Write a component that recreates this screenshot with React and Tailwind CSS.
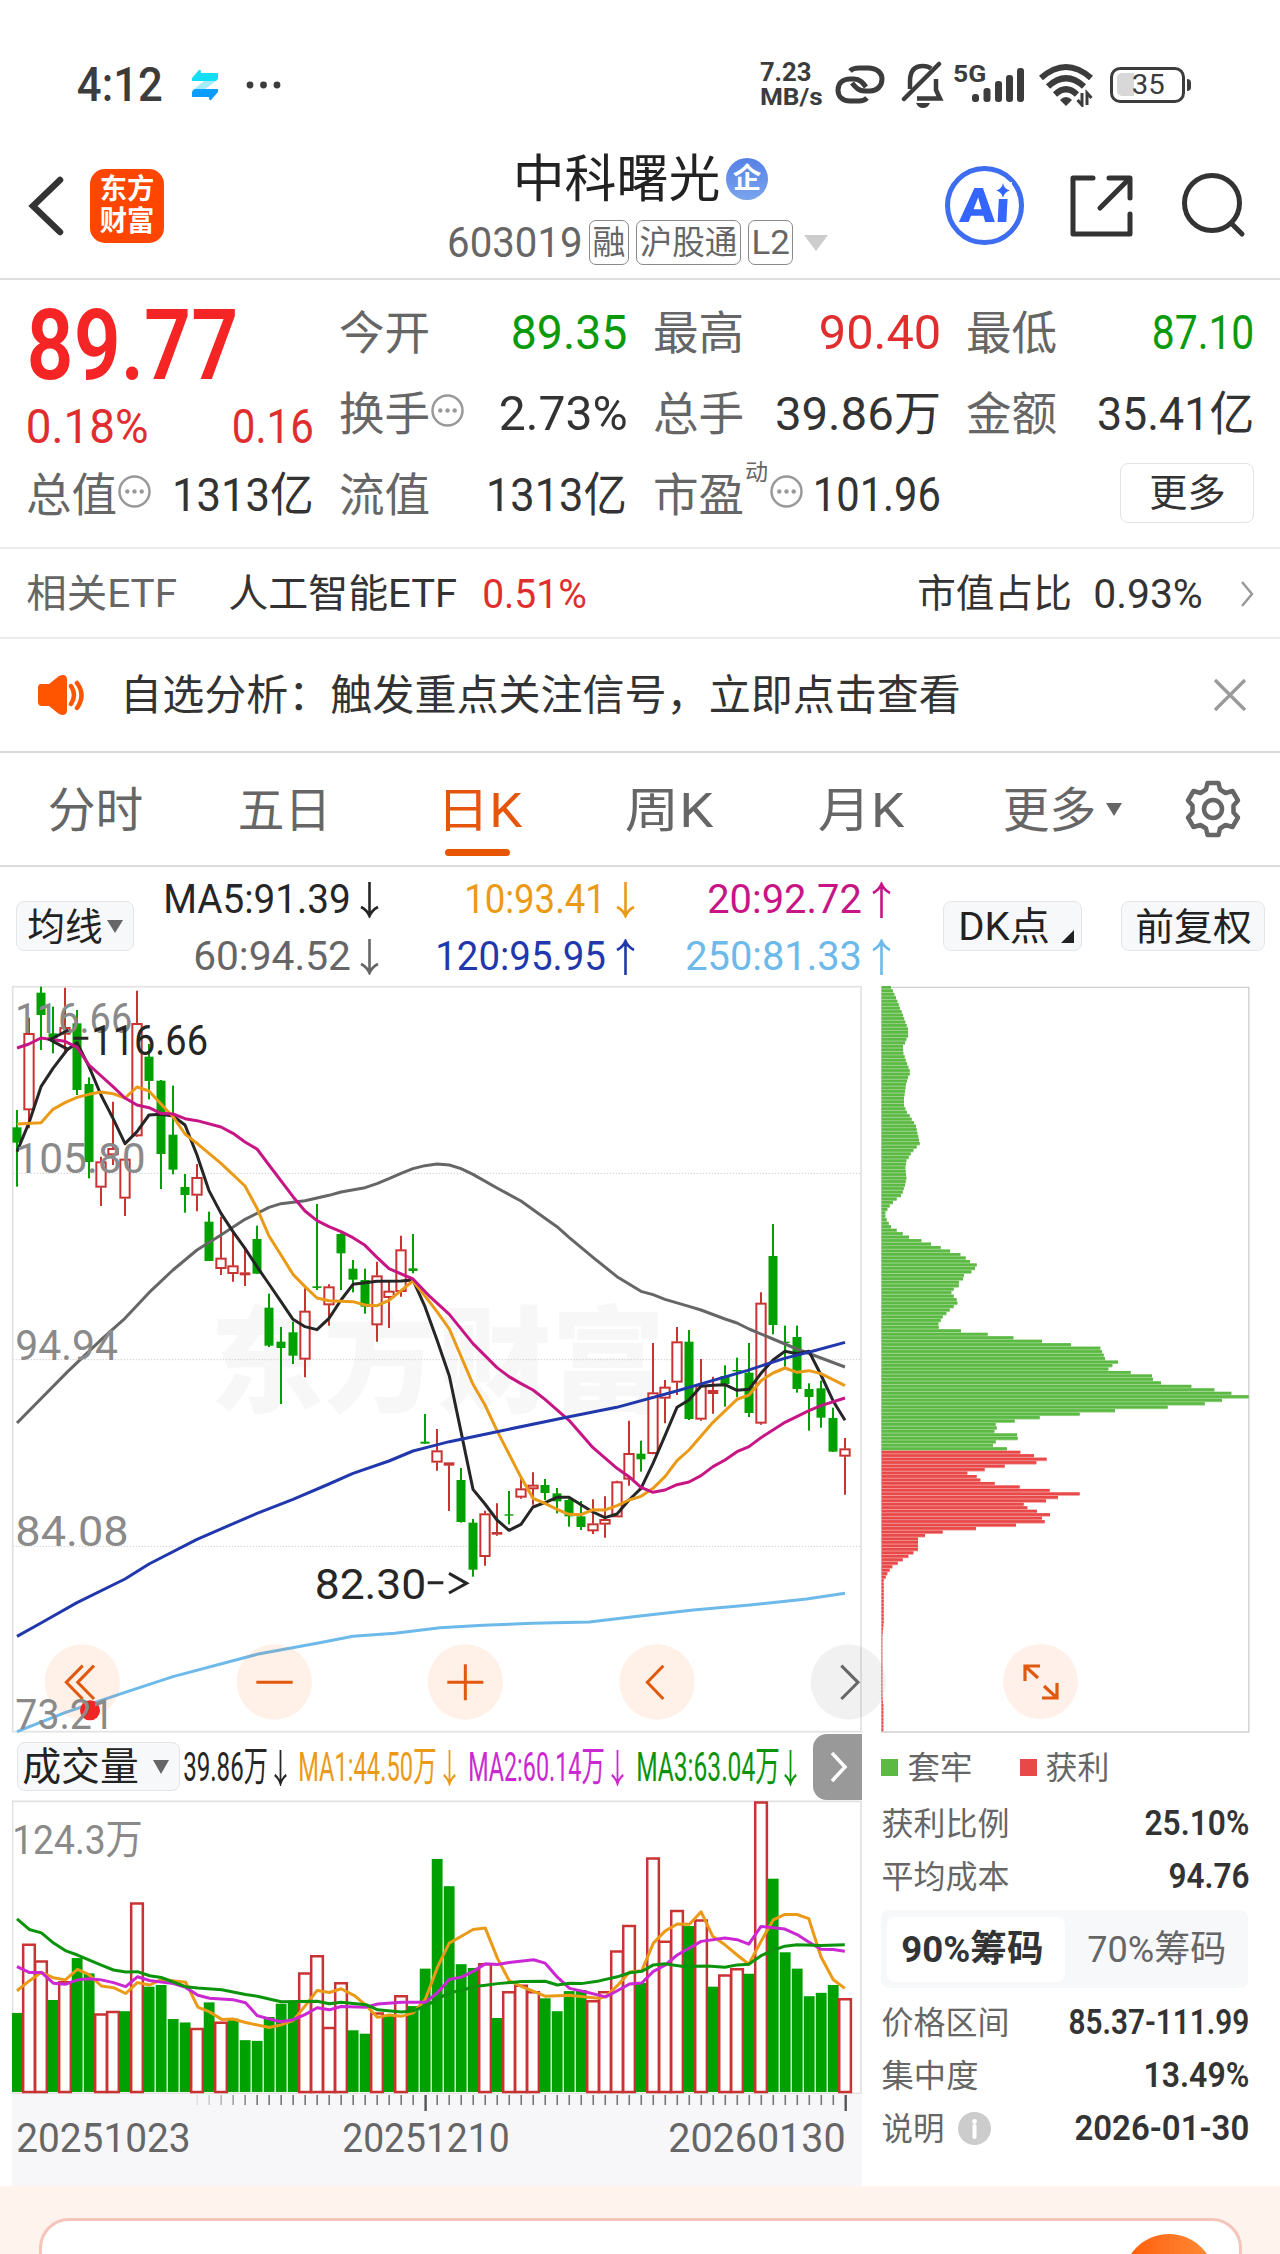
import React, { useLayoutEffect, useRef, useState } from "react";

/* Single line of text whose glyph run is fitted to a given width. */
function Fit({ w, className = "", children }) {
  const ref = useRef(null);
  const [fit, setFit] = useState({ scale: 1, pad: 0 });
  useLayoutEffect(() => {
    const el = ref.current;
    const pad = parseFloat(getComputedStyle(el).fontSize) * 0.045;
    setFit({ scale: (w + pad * 2) / el.offsetWidth, pad });
  }, [w, children]);
  return (
    <span className={`block shrink-0 leading-none whitespace-nowrap ${className}`} style={{ width: w }}>
      <span
        ref={ref}
        className="inline-block origin-left"
        style={{ transform: `translateX(${-fit.pad}px) scaleX(${fit.scale})` }}
      >
        {children}
      </span>
    </span>
  );
}

/* ---------- price chart data: [colour, high, top, bottom, low] ---------- */
const CANDLES = [
  ["g", 420, 472, 518, 650], ["r", 143, 190, 420, 475], ["g", 50, 68, 135, 240], ["g", 110, 190, 205, 250],
  ["r", 53, 172, 193, 245], ["g", 120, 160, 360, 375], ["g", 322, 342, 576, 625], ["r", 560, 575, 652, 708],
  ["r", 395, 535, 555, 585], ["r", 565, 567, 685, 738], ["r", 62, 160, 498, 500], ["g", 222, 260, 333, 388],
  ["g", 330, 332, 552, 657], ["g", 347, 494, 599, 613], ["g", 612, 651, 675, 728], ["r", 582, 622, 676, 724],
  ["g", 725, 755, 873, 873], ["r", 740, 864, 896, 915], ["r", 785, 887, 911, 935], ["r", 835, 908, 915, 948],
  ["g", 767, 807, 911, 911], ["g", 971, 1013, 1127, 1131], ["g", 1071, 1115, 1134, 1302], ["g", 1055, 1087, 1157, 1182],
  ["r", 955, 1023, 1168, 1222], ["g", 702, 949, 954, 960], ["r", 943, 950, 1005, 1067], ["g", 790, 792, 850, 960],
  ["g", 870, 896, 929, 967], ["g", 896, 930, 1010, 1031], ["r", 875, 917, 1065, 1115], ["r", 930, 963, 983, 1074],
  ["r", 797, 839, 965, 980], ["g", 792, 895, 903, 910], ["g", 1332, 1415, 1421, 1421], ["r", 1377, 1442, 1477, 1502],
  ["r", 1478, 1478, 1486, 1623], ["g", 1494, 1530, 1656, 1658], ["g", 1647, 1658, 1799, 1820], ["r", 1622, 1631, 1760, 1787],
  ["r", 1600, 1687, 1693, 1697], ["g", 1563, 1633, 1637, 1663], ["r", 1520, 1556, 1582, 1586], ["r", 1507, 1545, 1557, 1604],
  ["g", 1527, 1545, 1569, 1590], ["g", 1554, 1570, 1594, 1630], ["g", 1585, 1590, 1639, 1670], ["g", 1593, 1639, 1671, 1680],
  ["r", 1588, 1661, 1683, 1692], ["r", 1579, 1648, 1663, 1703], ["r", 1532, 1535, 1641, 1641], ["r", 1352, 1450, 1528, 1547],
  ["g", 1412, 1451, 1468, 1505], ["r", 1119, 1268, 1451, 1453], ["r", 1230, 1251, 1285, 1360], ["r", 1071, 1115, 1237, 1275],
  ["g", 1080, 1115, 1347, 1350], ["r", 1167, 1245, 1348, 1352], ["r", 1220, 1261, 1271, 1331], ["g", 1186, 1218, 1242, 1310],
  ["g", 1163, 1200, 1204, 1282], ["g", 1119, 1208, 1329, 1341], ["r", 967, 999, 1360, 1364], ["g", 762, 858, 1065, 1093],
  ["g", 1067, 1115, 1119, 1190], ["g", 1067, 1101, 1257, 1268], ["g", 1240, 1257, 1281, 1382], ["g", 1232, 1255, 1343, 1373],
  ["g", 1313, 1344, 1445, 1446], ["r", 1404, 1436, 1459, 1574],
];

const MA_LINES = [
  ["#666666", "51,1359 203,1205 310,1103 375,1045 447,968 519,900 591,840 663,795 735,748 807,712 843,701 915,692 987,676 1023,666 1095,653 1131,641 1167,626 1203,610 1239,596 1275,587 1311,582 1348,585 1383,596 1419,613 1491,654 1563,693 1635,745 1671,770 1707,802 1779,862 1851,920 1923,964 1959,974 1995,988 2067,1009 2103,1020 2175,1047 2211,1059 2247,1077 2319,1107 2391,1137 2535,1191"],
  ["#262626", "51,545 87,458 123,350 159,295 201,240 231,218 267,290 303,375 339,445 375,521 411,485 447,435 483,433 519,438 555,465 591,555 627,662 663,730 699,785 735,835 771,890 807,942 843,995 879,1048 915,1070 951,1079 987,1045 1023,990 1059,943 1131,934 1203,933 1239,930 1275,1010 1311,1110 1348,1218 1383,1385 1419,1558 1455,1602 1491,1650 1527,1681 1563,1663 1599,1611 1635,1598 1671,1582 1707,1582 1743,1604 1779,1626 1815,1643 1851,1632 1887,1590 1923,1555 1959,1480 1995,1397 2031,1312 2067,1290 2103,1249 2139,1246 2175,1244 2211,1261 2247,1258 2283,1210 2319,1170 2355,1144 2391,1151 2427,1144 2463,1215 2499,1292 2535,1351"],
  ["#eb9a17", "51,462 123,458 159,418 195,398 231,382 267,373 303,366 339,371 375,384 411,351 447,363 483,402 519,440 555,492 591,520 663,580 735,648 771,715 807,798 843,855 879,913 915,950 951,984 987,992 1059,995 1095,1005 1131,1007 1167,991 1203,962 1239,933 1275,978 1311,1025 1348,1077 1419,1243 1455,1305 1491,1382 1563,1522 1599,1585 1635,1600 1671,1618 1707,1633 1743,1634 1779,1619 1815,1620 1851,1607 1887,1590 1923,1579 1959,1555 1995,1520 2031,1472 2067,1440 2139,1357 2211,1288 2247,1275 2283,1232 2319,1209 2355,1194 2391,1207 2427,1202 2463,1211 2535,1247"],
  ["#c71585", "51,234 87,222 123,204 195,214 231,232 267,285 339,350 375,384 411,405 447,413 483,430 519,432 555,446 591,452 663,471 699,490 735,516 771,537 807,585 879,680 915,723 951,752 987,770 1023,785 1059,803 1095,826 1131,862 1167,896 1239,927 1290,980 1348,1033 1419,1121 1491,1193 1527,1220 1563,1241 1599,1260 1635,1288 1707,1351 1779,1433 1851,1495 1887,1520 1923,1552 1959,1567 1995,1560 2031,1544 2067,1536 2103,1517 2139,1490 2175,1470 2211,1445 2247,1430 2283,1403 2355,1357 2427,1322 2463,1307 2535,1284"],
  ["#2138ac", "51,1999 123,1959 231,1898 375,1827 447,1782 591,1708 771,1630 879,1588 987,1542 1059,1510 1167,1473 1239,1443 1290,1430 1348,1415 1491,1385 1700,1342 1850,1312 2030,1263 2243,1201 2353,1165 2440,1143 2535,1117"],
  ["#6cb9ea", "51,2285 195,2228 375,2167 519,2120 771,2053 951,2020 1059,1999 1185,1990 1320,1973 1450,1966 1596,1960 1768,1956 1900,1940 2080,1920 2250,1905 2420,1887 2535,1870"],
];

const AXIS_LABELS = [
  ["116.66", 188, 343], ["105.80", 608, 383], ["94.94", 1169, 300], ["84.08", 1728, 332], ["73.21", 2276, 288],
];

/* ---------- chip distribution profile: [y, x] ---------- */
const CHIPS = [
  [34, 93], [48, 103], [62, 112], [76, 120], [90, 129], [105, 136], [118, 144], [132, 144], [140, 139], [146, 135], [155, 129], [167, 130],
  [175, 134], [188, 141], [202, 149], [209, 149], [216, 144], [230, 138], [243, 135], [257, 132], [270, 132], [278, 136], [285, 141],
  [292, 149], [300, 155], [307, 162], [314, 168], [328, 172], [340, 177], [349, 179], [355, 170], [362, 160], [369, 152], [376, 146],
  [383, 139], [397, 136], [418, 139], [432, 135], [445, 128], [453, 123], [460, 110], [467, 99], [474, 89], [481, 82], [488, 76],
  [495, 76], [502, 80], [509, 86], [516, 93], [523, 110], [530, 128], [537, 147], [544, 184], [550, 213], [557, 242], [564, 270],
  [571, 301], [578, 317], [585, 330], [592, 350], [599, 345], [606, 334], [613, 312], [620, 309], [627, 297], [634, 296], [641, 281],
  [648, 274], [655, 281], [661, 290], [668, 292], [675, 281], [682, 269], [690, 259], [697, 248], [704, 242], [711, 235], [718, 236],
  [725, 303], [732, 383], [739, 460], [746, 546], [752, 633], [759, 721], [766, 726], [773, 731], [780, 735], [787, 774], [794, 757],
  [801, 745], [808, 812], [815, 876], [822, 879], [829, 903], [836, 994], [843, 1063], [850, 1114], [857, 1166], [863, 1086],
  [870, 1034], [877, 923], [885, 765], [892, 659], [899, 539], [906, 464], [913, 407], [920, 410], [927, 403], [934, 471], [941, 473],
  [948, 407], [954, 399], [961, 441], [968, 481], [975, 522], [982, 560], [989, 529], [996, 434], [1003, 374], [1010, 322],
  [1017, 350], [1023, 361], [1030, 404], [1037, 479], [1044, 569], [1051, 659], [1058, 594], [1065, 558], [1072, 491], [1080, 502],
  [1087, 531], [1094, 570], [1101, 546], [1108, 554], [1115, 468], [1122, 348], [1129, 248], [1136, 195], [1143, 174], [1163, 174],
  [1170, 160], [1177, 145], [1184, 128], [1191, 113], [1198, 97], [1205, 89], [1212, 82], [1219, 77], [1226, 71], [1310, 71],
  [1340, 67], [1460, 67], [1480, 70], [1540, 70],
];

function chipAt(y) {
  const near = CHIPS.find((p) => Math.abs(p[0] - y) < 2);
  if (near) return near[1];
  for (let i = 1; i < CHIPS.length; i++) {
    const [y0, x0] = CHIPS[i - 1];
    const [y1, x1] = CHIPS[i];
    if (y <= y1) return x0 + ((x1 - x0) * (y - y0)) / (y1 - y0);
  }
  return 70;
}

/* ---------- volume data ---------- */
const VOLUMES =
  "g860 r658 r707 g822 r768 g699 g744 r863 r855 g855 r537 g783 g778 g878 g888 r905 g829 r887 g877 g940 g942 g872 g833 g825 r742 r692 r902 r771 g911 g921 r860 g866 r809 g840 g730 g408 g488 g717 g728 r715 g875 r797 r778 r797 g817 g855 g796 g793 r824 r797 r678 r603 g772 r405 r649 r559 g605 r587 g783 r748 r730 g745 r240 g466 g682 g730 g811 g801 g778 r818".split(" ");

const VOLUME_LINES = [
  ["#eb9a17", "31,795 53,766 75,741 97,757 118,763 140,732 160,747 183,781 205,786 227,803 248,771 270,778 291,762 335,770 357,843 378,857 400,879 420,878 443,888 486,903 507,895 529,882 550,840 572,794 594,800 615,789 640,810 660,838 681,873 702,866 724,870 745,860 767,820 789,725 810,655 832,635 853,615 875,611 897,700 918,765 940,782 983,811 1027,808 1060,814 1080,817 1092,812 1113,780 1135,740 1157,736 1178,655 1199,620 1221,599 1243,600 1264,563 1285,635 1307,660 1329,690 1350,717 1372,650 1394,587 1415,571 1437,571 1458,583 1480,695 1502,762 1523,788"],
  ["#cb27d2", "31,724 53,741 75,741 97,773 118,776 140,763 160,760 183,763 205,771 227,783 248,754 270,765 313,774 335,785 357,808 378,817 420,821 443,830 464,868 486,878 507,886 529,880 550,865 572,845 594,851 615,841 660,843 681,834 724,829 767,829 789,800 810,762 832,755 853,738 875,716 897,718 918,712 962,704 983,714 1005,755 1027,788 1060,800 1092,813 1113,795 1135,775 1157,772 1178,738 1199,720 1221,690 1264,650 1307,640 1329,645 1350,658 1372,606 1415,614 1437,630 1458,652 1480,673 1502,674 1523,679"],
  ["#0b940b", "31,584 53,615 75,625 97,655 118,677 140,690 183,720 205,734 227,740 248,739 270,751 291,756 335,783 357,787 400,792 443,806 464,811 507,827 572,826 594,833 615,829 660,836 681,851 724,857 745,854 767,840 789,820 810,800 832,795 853,783 875,779 897,774 940,768 983,767 1005,778 1027,773 1048,774 1080,766 1113,754 1135,742 1157,738 1178,719 1199,716 1232,724 1275,722 1307,726 1329,719 1350,717 1372,692 1394,676 1415,664 1437,660 1480,662 1523,660"],
];

function StatusBar() {
  return (
    <div className="flex h-[150px] items-start pt-[60px] text-[#3c3c3c]">
      <div className="flex h-[50px] w-full items-center">
        <Fit w={82} className="ml-[79px] text-[48px] font-medium">4:12</Fit>
        <svg className="ml-[30px] shrink-0" width="28" height="32" viewBox="0 0 28 32">
          <path d="M1 9 8 1q2-1 2 3H27v6q-1 2-3 2H1z" fill="#12dff5" />
          <path d="M13 12H25L13 21H2z" fill="#a5ecfb" />
          <path d="M1 29V23q1-3 4-3H27V23L20 31q-2 1-2-3H1z" fill="#0a9dfd" />
        </svg>
        <svg className="ml-[27px] shrink-0" width="36" height="8" viewBox="0 0 36 8" fill="#3c3c3c">
          <circle cx="4" cy="4" r="3.4" /><circle cx="17.500" cy="4" r="3.4" /><circle cx="31" cy="4" r="3.4" />
        </svg>
        <div className="mb-[2px] ml-[479px] flex w-[62px] shrink-0 flex-col font-bold">
          <Fit w={49} className="text-[25px]">7.23</Fit>
          <Fit w={61} className="text-[24px]">MB/s</Fit>
        </div>
        <svg className="ml-[9px] shrink-0" width="56" height="44" viewBox="0 0 56 44" fill="none" stroke="#3c3c3c" strokeWidth="5">
          <path d="M35 35C33 37 30 38 27 38H18C10 38 6 33 6 27C6 20 11 16 18 16H22C28 16 31 20 34 24" />
          <path d="M18 8C20 6 23 5 27 5H36C45 5 50 10 50 16C50 23 45 28 38 28H33C27 28 24 25 20 20" />
        </svg>
        <svg className="ml-[13px] shrink-0" width="44" height="48" viewBox="0 0 44 48" fill="none" stroke="#3c3c3c" strokeWidth="4.500">
          <path d="M9 28V20Q9 5 22 5 27 5 30 7.5" />
          <path d="M35 18V29L39 37.5H16" />
          <path d="M3 38 38 3" strokeLinecap="round" />
          <path d="M15 42H29Q27 47 22 47 17 47 15 42z" fill="#3c3c3c" stroke="none" />
        </svg>
        <Fit w={31} className="mb-[22px] ml-[9px] text-[24px] font-bold">5G</Fit>
        <svg className="-ml-[14px] shrink-0" width="54" height="36" viewBox="0 0 54 36" fill="#3c3c3c">
          <rect x="1" y="27" width="7" height="8" rx="3" />
          <rect x="12.500" y="21" width="7" height="14" rx="3" />
          <rect x="24" y="14" width="7" height="21" rx="3" />
          <rect x="35" y="8" width="7" height="27" rx="3" />
          <rect x="46" y="1" width="7" height="34" rx="3" />
        </svg>
        <svg className="ml-[13px] shrink-0" width="58" height="44" viewBox="0 0 58 44" fill="none" stroke="#3c3c3c" strokeWidth="6">
          <path d="M3 15Q28-7 53 15" /><path d="M10 23.500Q28 7 46 23.500" /><path d="M17 31.500Q28 21 39 31.500" />
          <path d="M22 37Q28 31 34 37L28 43z" fill="#3c3c3c" stroke="none" />
          <path d="M44 30V42L39.500 37M49 42V30L53.500 35" strokeWidth="3" />
        </svg>
        <div className="relative ml-[14px] flex h-[36px] w-[75px] shrink-0 items-center justify-center rounded-[10px] border-[3.500px] border-[#3c3c3c]">
          <div className="absolute top-[3px] left-[4px] h-[23px] w-[17px] rounded-l-[5px] bg-[#d8d8d8]" />
          <Fit w={30} className="relative text-[28px]">35</Fit>
        </div>
        <div className="ml-[2px] h-[12px] w-[4px] rounded-r-full bg-[#3c3c3c]" />
      </div>
    </div>
  );
}

function Tag({ w, tw, children }) {
  return (
    <div className="flex h-[45px] shrink-0 items-center justify-center rounded-[7px] border-[1.500px] border-[#8a8a8a]" style={{ width: w }}>
      <Fit w={tw} className="text-[33px]">{children}</Fit>
    </div>
  );
}

function Header() {
  return (
    <div className="flex h-[130px] items-start border-b-2 border-[#dedede]">
      <svg className="mt-[26px] ml-[27px] shrink-0" width="38" height="60" viewBox="0 0 38 60" fill="none" stroke="#333" strokeWidth="6.500" strokeLinecap="round">
        <path d="M33 4 6 30 33 56" />
      </svg>
      <div className="mt-[19px] ml-[25px] flex h-[74px] w-[74px] shrink-0 flex-col items-center justify-center gap-[4px] rounded-[15px] bg-[#ff4600] font-bold text-white">
        <Fit w={52} className="text-[28px]">东方</Fit>
        <Fit w={52} className="text-[28px]">财富</Fit>
      </div>
      <div className="ml-[285px] w-[400px] shrink-0">
        <div className="flex h-[58px] items-center pl-[66px]">
          <Fit w={203} className="text-[51px] text-[#222]">中科曙光</Fit>
          <div className="ml-[8px] flex h-[42px] w-[42px] items-center justify-center rounded-full bg-gradient-to-b from-[#5580e6] to-[#7aa4ec] font-bold text-white">
            <Fit w={26} className="text-[28px]">企</Fit>
          </div>
        </div>
        <div className="mt-[12px] flex h-[45px] items-center text-[#666]">
          <Fit w={132} className="text-[42px]">603019</Fit>
          <div className="ml-[8px] flex gap-[7px]">
            <Tag w={40} tw={30}>融</Tag>
            <Tag w={105} tw={95}>沪股通</Tag>
            <Tag w={45} tw={35}>L2</Tag>
          </div>
          <svg className="ml-[11px]" width="24" height="16" viewBox="0 0 24 16"><path d="M0 0H24L12 16z" fill="#ccc" /></svg>
        </div>
      </div>
      <div className="relative mt-[16px] ml-[96px] flex h-[79px] w-[79px] shrink-0 items-center justify-center rounded-full border-[5px] border-[#3d6df0] text-[#3565ff]">
        <div className="-skew-x-3">
          <Fit w={46} className="text-[48px] font-black">Ai</Fit>
        </div>
        <svg className="absolute top-[11px] right-[7px]" width="18" height="18" viewBox="0 0 18 18">
          <rect width="18" height="17" fill="#fff" />
          <path d="M9 1Q10 7 16 8.500 10 10 9 16 8 10 2 8.500 8 7 9 1z" fill="#3565ff" />
        </svg>
      </div>
      <svg className="mt-[24px] ml-[45px] shrink-0" width="66" height="66" viewBox="0 0 66 66" fill="none" stroke="#333" strokeWidth="5" strokeLinecap="round" strokeLinejoin="round">
        <path d="M24 4H4V60H61V40" /><path d="M40 4H61V24" /><path d="M60 5 31 34" />
      </svg>
      <svg className="mt-[20px] ml-[45px] shrink-0" width="68" height="70" viewBox="0 0 68 70" fill="none" stroke="#333" strokeWidth="5" strokeLinecap="round">
        <circle cx="32" cy="33" r="27.500" /><path d="M51 53 62 64" />
      </svg>
    </div>
  );
}

function More() {
  return (
    <svg className="mb-[6px] ml-[3px] shrink-0" width="33" height="33" viewBox="0 0 33 33">
      <circle cx="16.500" cy="16.500" r="15" fill="none" stroke="#999" strokeWidth="2.500" />
      <g fill="#999"><circle cx="9.300" cy="16.500" r="2.200" /><circle cx="16.500" cy="16.500" r="2.200" /><circle cx="23.700" cy="16.500" r="2.200" /></g>
    </svg>
  );
}

function Cell({ label, more, sup, value, w, tone = "text-[#333]", size = "text-[49px]" }) {
  return (
    <div className="flex h-[81px] items-center">
      <Fit w={87} className="text-[46px] text-[#666]">{label}</Fit>
      {sup && <Fit w={21} className="mb-[44px] ml-[4px] text-[23px] text-[#666]">{sup}</Fit>}
      {more && <More />}
      <Fit w={w} className={`ml-auto ${tone} ${size}`}>{value}</Fit>
    </div>
  );
}

function Quote() {
  return (
    <div className="grid h-[269px] grid-cols-4 grid-rows-[81px_81px_81px] gap-x-[29.600px] border-b-2 border-[#ececec] pt-[12px] pr-[28px] pl-[28px]">
      <div className="row-span-2">
        <Fit w={203} className="mt-[5px] ml-[3px] text-[98px] font-semibold text-[#f52525]">89.77</Fit>
        <div className="mt-[7px] flex justify-between text-[49px] text-[#e02e2e]">
          <Fit w={118}>0.18%</Fit>
          <Fit w={78}>0.16</Fit>
        </div>
      </div>
      <Cell label="今开" value="89.35" w={112} tone="text-[#0b9a0b]" />
      <Cell label="最高" value="90.40" w={118} tone="text-[#e02e2e]" />
      <Cell label="最低" value="87.10" w={98} tone="text-[#0b9a0b]" />
      <Cell label="换手" more value="2.73%" w={124} />
      <Cell label="总手" value="39.86万" w={162} size="text-[47px]" />
      <Cell label="金额" value="35.41亿" w={153} size="text-[47px]" />
      <Cell label="总值" more value="1313亿" w={138} size="text-[47px]" />
      <Cell label="流值" value="1313亿" w={137} size="text-[47px]" />
      <Cell label="市盈" sup="动" more value="101.96" w={124} />
      <div className="flex h-[81px] items-center justify-end">
        <div className="-mt-[3px] -mr-[2px] flex h-[60px] w-[134px] items-center justify-center rounded-[8px] border-[1.500px] border-[#e2e3e5]">
          <Fit w={73} className="text-[38px] text-[#333]">更多</Fit>
        </div>
      </div>
    </div>
  );
}

function EtfRow() {
  return (
    <div className="flex h-[90px] items-center border-b-2 border-[#ececec] pt-[2px] text-[39px] text-[#333]">
      <Fit w={147} className="ml-[28px] text-[#666]">相关ETF</Fit>
      <Fit w={225} className="ml-[55px]">人工智能ETF</Fit>
      <Fit w={101} className="ml-[29px] text-[41px] text-[#e02e2e]">0.51%</Fit>
      <Fit w={151} className="ml-[334px]">市值占比</Fit>
      <Fit w={106} className="ml-[25px] text-[41px]">0.93%</Fit>
      <svg className="ml-[39px]" width="14" height="26" viewBox="0 0 14 26" fill="none" stroke="#999" strokeWidth="2.500"><path d="M2 1 12 13 2 25" /></svg>
    </div>
  );
}

function Notice() {
  return (
    <div className="flex h-[114px] items-center border-b-2 border-[#dadada]">
      <svg className="ml-[37px] shrink-0" width="50" height="42" viewBox="0 0 50 42">
        <path d="M4 10H12L22 2Q30-1 30 6V36Q30 43 22 40L12 32H5Q1 32 1 28V14Q1 10 4 10z" fill="#ff5500" />
        <path d="M34 12Q40 21 34 30M40 9Q49 21 40 34" fill="none" stroke="#ff5500" strokeWidth="4.500" strokeLinecap="round" />
      </svg>
      <Fit w={837} className="mt-[2px] ml-[35px] text-[42px] text-[#333]">自选分析：触发重点关注信号，立即点击查看</Fit>
      <svg className="ml-[254px] shrink-0" width="34" height="34" viewBox="0 0 34 34" stroke="#999" strokeWidth="3.200"><path d="M2 2 32 32M32 2 2 32" /></svg>
    </div>
  );
}

function Tabs() {
  return (
    <div className="flex h-[114px] items-center border-b-2 border-[#dadada] text-[48px] text-[#666]">
      <Fit w={91} className="mt-[3px] ml-[50px]">分时</Fit>
      <Fit w={89} className="mt-[3px] ml-[99px]">五日</Fit>
      <div className="relative ml-[110px]">
        <Fit w={81} className="mt-[3px] text-[#e5560c]">日K</Fit>
        <div className="absolute top-[65px] left-[6px] h-[7px] w-[65px] rounded-full bg-[#e85500]" />
      </div>
      <Fit w={84} className="mt-[3px] ml-[107px]">周K</Fit>
      <Fit w={82} className="mt-[3px] ml-[109px]">月K</Fit>
      <Fit w={89} className="mt-[3px] ml-[103px]">更多</Fit>
      <svg className="ml-[12px] shrink-0" width="16" height="13" viewBox="0 0 16 13"><path d="M0 0H16L8 13z" fill="#666" /></svg>
      <svg className="ml-[63px] shrink-0" width="56" height="58" viewBox="0 0 56 58" fill="none" stroke="#666" strokeWidth="4.500" strokeLinejoin="round">
        <path d="M22.500 3H33.500L35 9.500 40.500 13 47.500 11 53 20.500 48.500 25.500V32.500L53 37.500 47.500 47 40.500 45 35 48.500 33.500 55H22.500L21 48.500 15.500 45 8.500 47 3 37.500 7.500 32.500V25.500L3 20.500 8.500 11 15.500 13 21 9.500z" />
        <circle cx="28" cy="29" r="9" />
      </svg>
    </div>
  );
}

function Arrow({ up, w = 19, className = "" }) {
  return (
    <svg className={`shrink-0 ${className}`} width={w} height="36" viewBox="0 0 19 36" preserveAspectRatio="none" fill="none" stroke="currentColor" strokeWidth="2.600">
      <path d={up ? "M9.500 36V2M1 11Q7 8 9.500 2 12 8 18 11" : "M9.500 0V34M1 25Q7 28 9.500 34 12 28 18 25"} />
    </svg>
  );
}

function MaItem({ text, w, up, tone, gap }) {
  return (
    <div className={`flex items-center justify-end ${tone}`}>
      <Fit w={w} className="text-[41px]">{text}</Fit>
      <Arrow up={up} className={gap} />
    </div>
  );
}

function MaBar() {
  const box = "flex h-[50px] shrink-0 items-center rounded-[8px] border-[1.500px] border-[#e3e5e8] bg-[#f7f8fa] text-[#222]";
  return (
    <div className="flex h-[119px] items-start">
      <div className={`${box} mt-[34px] ml-[16px] w-[118px] pl-[12px]`}>
        <Fit w={72} className="mt-[2px] text-[38px]">均线</Fit>
        <svg className="ml-[6px]" width="16" height="13" viewBox="0 0 16 13"><path d="M0 0H16L8 13z" fill="#666" /></svg>
      </div>
      <div className="mt-[4px] grid w-[757px] shrink-0 grid-cols-[245px_256px_256px] grid-rows-[57px_57px]">
        <MaItem text="MA5:91.39" w={184} tone="text-[#262626]" gap="ml-[11px]" />
        <MaItem text="10:93.41" w={138} tone="text-[#eb9a17]" gap="ml-[12px]" />
        <MaItem text="20:92.72" w={151} up tone="text-[#c71585]" gap="ml-[12px]" />
        <MaItem text="60:94.52" w={154} tone="text-[#666]" gap="ml-[11px]" />
        <MaItem text="120:95.95" w={167} up tone="text-[#2138ac]" gap="ml-[12px]" />
        <MaItem text="250:81.33" w={173} up tone="text-[#6cb9ea]" gap="ml-[12px]" />
      </div>
      <div className={`${box} mt-[34px] ml-[52px] w-[139px] pl-[16px]`}>
        <Fit w={88} className="mt-[2px] text-[39px]">DK点</Fit>
        <svg className="mt-[20px] ml-[13px]" width="13" height="13" viewBox="0 0 13 13"><path d="M13 0V13H0z" fill="#222" /></svg>
      </div>
      <div className={`${box} mt-[34px] ml-[39px] w-[144px] justify-center`}>
        <Fit w={113} className="mt-[2px] text-[38px]">前复权</Fit>
      </div>
    </div>
  );
}

function PriceChart() {
  return (
    <svg className="relative z-10 block overflow-visible" width="850" height="747" viewBox="36 48 2550 2241" fontFamily="Roboto, 'Noto Sans CJK SC', sans-serif">
      <rect x="38" y="50" width="2545" height="2235" fill="#fff" stroke="#e2e2e2" strokeWidth="5" />
      <text x="630" y="1300" fontSize="345" fontWeight="900" fill="#f7f7f7" textLength="1365" lengthAdjust="spacingAndGlyphs">东方财富</text>
      {[610, 1169, 1729].map((y) => (
        <line key={y} x1="38" x2="2583" y1={y} y2={y} stroke="#cfcfcf" strokeWidth="3" strokeDasharray="4 5" />
      ))}
      {CANDLES.map(([c, h, t, b, l], i) => {
        const x = 51 + 36 * i;
        return c === "g" ? (
          <g key={i} fill="#00a000">
            <rect x={x - 3} y={h} width="6" height={l - h} />
            <rect x={x - 13.5} y={t} width="27" height={Math.max(b - t, 4)} />
          </g>
        ) : (
          <g key={i} stroke="#c93333" strokeWidth="6">
            <line x1={x} x2={x} y1={h} y2={t} />
            <line x1={x} x2={x} y1={b} y2={l} />
            {b - t < 11 ? (
              <rect x={x - 16} y={t - 1} width="32" height={b - t + 2} fill="#c93333" stroke="none" />
            ) : (
              <rect x={x - 14} y={t + 2} width="28" height={b - t - 4} fill="#fff" />
            )}
          </g>
        );
      })}
      {MA_LINES.map(([c, pts]) => (
        <polyline key={c} points={pts} fill="none" stroke={c} strokeWidth="9" strokeLinejoin="round" />
      ))}
      <g fill="#ff6a20" fillOpacity="0.1">
        <circle cx="247" cy="2136" r="113" />
        <circle cx="823" cy="2136" r="113" />
        <circle cx="1396" cy="2136" r="113" />
        <circle cx="1971" cy="2136" r="113" />
      </g>
      <circle cx="2545" cy="2136" r="113" fill="#000" fillOpacity="0.055" />
      <g fill="none" stroke="#e0590f" strokeWidth="9">
        <path d="M248 2087 199 2137 248 2187M282 2087 233 2137 282 2187" />
        <path d="M769 2137H878" />
        <path d="M1342 2137H1450M1396 2083V2191" />
        <path d="M1990 2087 1942 2137 1990 2187" />
      </g>
      <path d="M2524 2087 2574 2137 2524 2187" fill="none" stroke="#666" strokeWidth="9" />
      <circle cx="270" cy="2221" r="30" fill="#f02525" />
      <g fontSize="126" fill="#8a8a8a">
        {AXIS_LABELS.map(([t, y, w]) => (
          <text key={t} x="46" y={y} textLength={w + 8} lengthAdjust="spacingAndGlyphs">{t}</text>
        ))}
      </g>
      <g fontSize="126" fill="#262626">
        <text x="274" y="254" textLength="350" lengthAdjust="spacingAndGlyphs">116.66</text>
        <text x="944" y="1886" textLength="335" lengthAdjust="spacingAndGlyphs">82.30</text>
      </g>
      <g fill="none" stroke="#262626" strokeWidth="9">
        <path d="M205 180 150 209 205 239M220 205H265" />
        <path d="M1283 1838H1330M1347 1810 1400 1840 1347 1869" />
      </g>
    </svg>
  );
}

function VolumeHeader() {
  return (
    <div className="flex h-[67px] items-center text-[41px]">
      <div className="ml-[5px] flex h-[49px] w-[163px] shrink-0 items-center rounded-[8px] border-[1.500px] border-[#e3e5e8] bg-[#f7f8fa] pl-[6px] text-[#222]">
        <Fit w={113} className="mt-[2px] text-[39px]">成交量</Fit>
        <svg className="ml-[16px]" width="16" height="14" viewBox="0 0 16 14"><path d="M0 0H16L8 14z" fill="#666" /></svg>
      </div>
      <div className="mt-[2px] ml-[5px] flex items-center text-[#262626]">
        <Fit w={81}>39.86万</Fit><Arrow w={13} className="ml-[8px]" />
      </div>
      <div className="mt-[2px] ml-[13px] flex items-center text-[#eb9a17]">
        <Fit w={135}>MA1:44.50万</Fit><Arrow w={13} className="ml-[8px]" />
      </div>
      <div className="mt-[2px] ml-[14px] flex items-center text-[#cb27d2]">
        <Fit w={133}>MA2:60.14万</Fit><Arrow w={13} className="ml-[8px]" />
      </div>
      <div className="mt-[2px] ml-[14px] flex items-center text-[#0b940b]">
        <Fit w={140}>MA3:63.04万</Fit><Arrow w={13} className="ml-[6px]" />
      </div>
      <div className="ml-auto flex h-[66px] w-[49px] shrink-0 items-center justify-center rounded-l-[14px] bg-[#999]">
        <svg width="20" height="32" viewBox="0 0 20 32" fill="none" stroke="#fff" strokeWidth="3.500"><path d="M4 2 17 16 4 30" /></svg>
      </div>
    </div>
  );
}

function VolumeChart() {
  return (
    <div className="relative h-[294px]">
      <svg className="block" width="850" height="294" viewBox="22 235 1532 863" preserveAspectRatio="none">
        <rect x="23" y="239" width="1529" height="857" fill="#fff" stroke="#e2e2e2" strokeWidth="1.800" vectorEffect="non-scaling-stroke" />
        {VOLUMES.map((v, i) => {
          const x = 31 + 21.63 * i;
          const y = Number(v.slice(1));
          return v[0] === "g" ? (
            <rect key={i} x={Math.max(x - 9.5, 22)} y={y} width={i ? 19.5 : 18} height={1092 - y} fill="#00a000" />
          ) : (
            <rect key={i} x={x - 10.5} y={y + 2} width="21" height={1090 - y} fill="#fff" stroke="#c93333" strokeWidth="2.500" vectorEffect="non-scaling-stroke" />
          );
        })}
        {VOLUME_LINES.map(([c, pts]) => (
          <polyline key={c} points={pts} fill="none" stroke={c} strokeWidth="3" strokeLinejoin="round" vectorEffect="non-scaling-stroke" />
        ))}
      </svg>
      <div className="absolute top-[20px] left-[2px] text-[#8a8a8a]">
        <Fit w={127} className="text-[41px]">124.3万</Fit>
      </div>
    </div>
  );
}

function DateAxis() {
  return (
    <div className="h-[92px] bg-[#f7f7fa] text-[40px] text-[#666]">
      <svg className="block" width="850" height="20" viewBox="12 0 850 20">
        {Array.from({ length: 55 }, (_, k) => {
          const i = k + 15;
          const long = i === 34 || i === 69;
          return (
            <rect key={i} x={16.3 + 12.003 * i} y="1" width={long ? 2.4 : 1.6} height={long ? 16 : 10} fill={long ? "#555" : "#777"} opacity={Math.min(1, (k + 1) / 6)} />
          );
        })}
      </svg>
      <div className="flex pt-[5px]">
        <Fit w={171} className="ml-[6px]">20251023</Fit>
        <Fit w={164} className="ml-[155px]">20251210</Fit>
        <Fit w={174} className="ml-[162px]">20260130</Fit>
      </div>
    </div>
  );
}

function ChipChart() {
  return (
    <div className="relative h-[747px]">
      <svg className="block" width="369" height="747" viewBox="63 32.200 1107 1501.700" preserveAspectRatio="none">
        <rect x="64.500" y="35" width="1102" height="1497" fill="#fff" stroke="#cfcfcf" strokeWidth="1.400" vectorEffect="non-scaling-stroke" />
        {Array.from({ length: 215 }, (_, i) => {
          const y = 34.5 + 6.974 * i;
          const red = y > 964;
          const w = chipAt(y) - 65;
          return (
            <g key={i}>
              <rect x="65" y={y - 2.5} width={w} height="7" fill={red ? "#f29a9a" : "#9cd68d"} />
              <rect x="65" y={y - 2.5} width={w} height="5.300" fill={red ? "#e84848" : "#5bb944"} />
            </g>
          );
        })}
      </svg>
      <div className="absolute top-[658px] left-[122px] flex h-[75px] w-[75px] items-center justify-center rounded-full bg-[#fff1ea]">
        <svg width="38" height="38" viewBox="0 0 38 38" fill="none" stroke="#e0590f" strokeWidth="3.200">
          <path d="M18 3H3V18M3 3 16 15" /><path d="M20 35H35V20M35 35 22 23" />
        </svg>
      </div>
    </div>
  );
}

function InfoRow({ label, lw, value, vw, info }) {
  return (
    <div className="flex h-[53px] items-center pr-[2px] pl-[2px]">
      <Fit w={lw} className="text-[32px] text-[#666]">{label}</Fit>
      {info && (
        <svg className="ml-[15px]" width="33" height="33" viewBox="0 0 33 33">
          <circle cx="16.500" cy="16.500" r="16.500" fill="#ccc" />
          <circle cx="16.500" cy="9.500" r="2.400" fill="#fff" />
          <path d="M16.500 14V25" stroke="#fff" strokeWidth="4" strokeLinecap="round" />
        </svg>
      )}
      <Fit w={vw} className="ml-auto text-[35px] font-semibold text-[#333]">{value}</Fit>
    </div>
  );
}

function ChipPanel() {
  return (
    <div className="ml-[19px] w-[369px]">
      <ChipChart />
      <div className="flex h-[64px] items-center pt-[5px] text-[32px] text-[#666]">
        <div className="h-[17px] w-[17px] bg-[#5bb944]" />
        <Fit w={62} className="ml-[11px]">套牢</Fit>
        <div className="ml-[49px] h-[17px] w-[17px] bg-[#e84848]" />
        <Fit w={61} className="ml-[10px]">获利</Fit>
      </div>
      <InfoRow label="获利比例" lw={125} value="25.10%" vw={102} />
      <InfoRow label="平均成本" lw={125} value="94.76" vw={78} />
      <div className="mt-[7px] mb-[8px] flex h-[78px] w-[367px] items-center rounded-[8px] bg-[#f7f8fa] pl-[6px]">
        <div className="flex h-[65px] w-[178px] items-center rounded-[8px] bg-white pl-[16px]">
          <Fit w={139} className="text-[37px] font-bold text-[#333]">90%筹码</Fit>
        </div>
        <Fit w={136} className="ml-[24px] text-[37px] text-[#666]">70%筹码</Fit>
      </div>
      <InfoRow label="价格区间" lw={125} value="85.37-111.99" vw={178} />
      <InfoRow label="集中度" lw={94} value="13.49%" vw={103} />
      <InfoRow label="说明" lw={60} value="2026-01-30" vw={172} info />
    </div>
  );
}

export default function App() {
  return (
    <div className="h-[2254px] w-[1280px] overflow-hidden bg-white font-[Roboto,'Noto_Sans_CJK_SC',sans-serif]">
      <StatusBar />
      <Header />
      <Quote />
      <EtfRow />
      <Notice />
      <Tabs />
      <MaBar />
      <div className="flex h-[1200px] pl-[12px]">
        <div className="w-[850px] shrink-0">
          <PriceChart />
          <VolumeHeader />
          <VolumeChart />
          <DateAxis />
        </div>
        <ChipPanel />
      </div>
      <div className="h-[68px] overflow-hidden bg-[#fff3ee] pt-[32px] pr-[38px] pl-[39px]">
        <div className="h-[80px] rounded-t-[30px] border-[3px] border-[#f5c4ba] bg-white pt-[13px] pr-[24px]">
          <div className="ml-auto h-[92px] w-[92px] rounded-full bg-gradient-to-r from-[#ff5a00] to-[#ff8c35]" />
        </div>
      </div>
    </div>
  );
}
